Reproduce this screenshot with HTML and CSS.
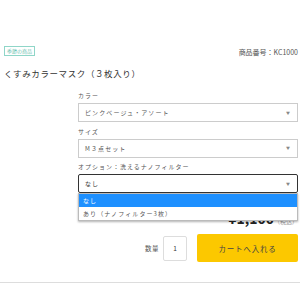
FILE: index.html
```html
<!DOCTYPE html>
<html lang="ja">
  <head>
    <meta charset="UTF-8" />
    <meta name="viewport" content="width=device-width, initial-scale=1.0" />
    <title>くすみカラーマスク</title>
    <link rel="stylesheet" href="styles.css">
  </head>
  <body>
    <div class="product">
      <div class="product-head">
        <span class="badge">季節の商品</span>
        <span class="code">商品番号：KC1000</span>
      </div>
      <h1 class="title">くすみカラーマスク（３枚入り）</h1>

      <div class="options">
        <div class="field">
          <div class="field-label">カラー</div>
          <div class="select">
            <span>ピンクベージュ・アソート</span>
            <span class="arrow">&#9660;</span>
          </div>
        </div>

        <div class="field">
          <div class="field-label">サイズ</div>
          <div class="select">
            <span>M３点セット</span>
            <span class="arrow">&#9660;</span>
          </div>
        </div>

        <div class="field field-open">
          <div class="field-label">オプション：洗えるナノフィルター</div>
          <div class="select select-focus">
            <span>なし</span>
            <span class="arrow">&#9660;</span>
          </div>
          <ul class="menu">
            <li class="menu-item active">なし</li>
            <li class="menu-item">あり（ナノフィルター3枚）</li>
          </ul>
        </div>

        <div class="price">
          <span class="amount">¥1,100</span><span class="tax">（税込）</span>
        </div>

        <div class="cart-row">
          <span class="qty-label">数量</span>
          <div class="qty">1</div>
          <button class="cart-btn">カートへ入れる</button>
        </div>
      </div>
    </div>
    <hr class="divider" />
  </body>
</html>
```

FILE: styles.css
```css
* {
  margin: 0;
  padding: 0;
  box-sizing: border-box;
}

body {
  font-family: "Noto Sans CJK JP", "Noto Sans", sans-serif;
  background-color: #fff;
  color: #333;
}

.product {
  padding: 46px 2px 0 4px;
}

.product-head {
  display: flex;
  justify-content: space-between;
  align-items: center;
  height: 10px;
}

.badge {
  display: inline-block;
  border: 1px solid #8fd6c8;
  color: #6cc3b2;
  font-size: 5px;
  line-height: 8px;
  padding: 0 2px;
}

.code {
  font-size: 7px;
  color: #555;
  line-height: 10px;
  margin-top: 2px;
}

.title {
  font-size: 8.5px;
  font-weight: normal;
  letter-spacing: 0.6px;
  color: #333;
  margin-top: 11px;
  line-height: 12px;
}

.options {
  margin: 12px 0 0 74px;
}

.field {
  margin-bottom: 4.5px;
}

.field-label {
  font-size: 6px;
  letter-spacing: 1px;
  color: #555;
  line-height: 10px;
  margin-bottom: 2px;
}

.select {
  display: flex;
  justify-content: space-between;
  align-items: center;
  height: 19px;
  border: 1px solid #ccc;
  padding: 0 6px;
  font-size: 6px;
  letter-spacing: 1.1px;
  color: #555;
}

.arrow {
  font-size: 4px;
  color: #888;
}

.field-open {
  position: relative;
}

.select-focus {
  border-color: #333;
  border-radius: 2px;
  color: #333;
}

.menu {
  position: absolute;
  top: 100%;
  left: 0;
  right: 0;
  list-style: none;
  background-color: #fff;
  border: 1px solid #bbb;
  box-shadow: 0 1px 2px rgba(0, 0, 0, 0.3);
  z-index: 2;
}

.menu-item {
  font-size: 6px;
  letter-spacing: 1.1px;
  color: #555;
  padding: 0 4px;
  height: 13px;
  line-height: 13px;
}

.menu-item.active {
  background-color: #1e90ff;
  color: #fff;
}

.price {
  text-align: right;
  margin-top: 16px;
  line-height: 16px;
}

.amount {
  font-size: 14px;
  font-weight: bold;
  color: #222;
}

.tax {
  font-size: 6px;
  color: #999;
}

.cart-row {
  display: flex;
  justify-content: flex-end;
  align-items: center;
  margin-top: 4px;
}

.qty-label {
  font-size: 6.5px;
  letter-spacing: 0.5px;
  color: #555;
  margin-right: 4px;
}

.qty {
  width: 24px;
  height: 25px;
  border: 1px solid #ddd;
  border-radius: 2px;
  font-size: 6.5px;
  display: flex;
  align-items: center;
  justify-content: center;
  margin-right: 10px;
}

.cart-btn {
  width: 101px;
  height: 28px;
  background-color: #fcc800;
  border: none;
  border-radius: 2px;
  font-family: inherit;
  font-size: 7.5px;
  letter-spacing: 0.8px;
  color: #444;
}

.divider {
  border: none;
  border-top: 1px solid #ddd;
  margin-top: 20px;
}
```
